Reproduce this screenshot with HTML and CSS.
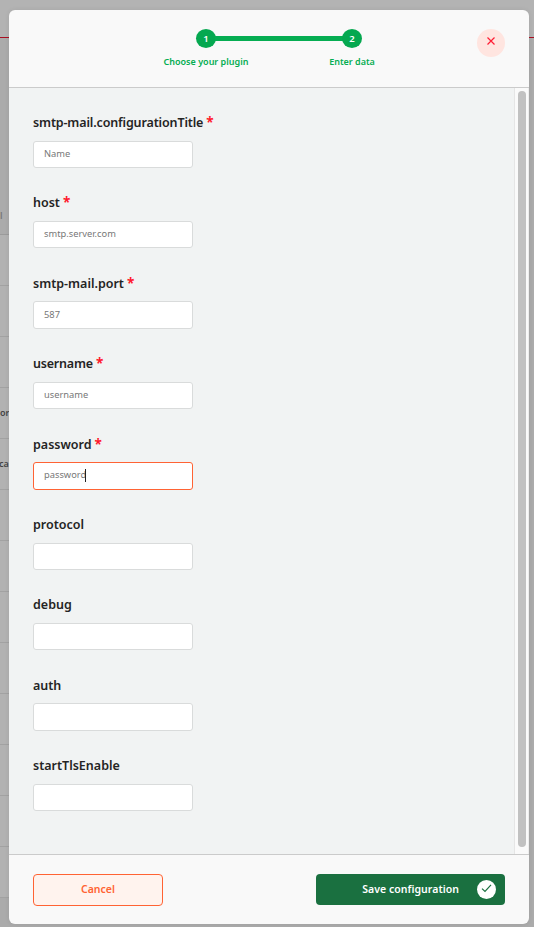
FILE: index.html
```html
<!DOCTYPE html>
<html lang="en">
<head>
<meta charset="utf-8">
<title>Save configuration</title>
<link rel="stylesheet" href="styles.css">
</head>
<body>
<div class="page">
  <div class="topbar"></div>
  <div class="thead"><span>l</span></div>
  <div class="row"></div>
  <div class="row"></div>
  <div class="row"></div>
  <div class="row"><span>or</span></div>
  <div class="row"><span class="cut">ca</span></div>
  <div class="row"></div>
  <div class="row"></div>
  <div class="row"></div>
  <div class="row"></div>
  <div class="row"></div>
  <div class="row"></div>
  <div class="row"></div>
  <div class="row"></div>
</div>
<div class="modal">
  <header class="header">
    <div class="stepper">
      <div class="step"><span class="dot">1</span><span class="step-name">Choose your plugin</span></div>
      <div class="line"></div>
      <div class="step"><span class="dot">2</span><span class="step-name second">Enter data</span></div>
    </div>
    <button class="close" aria-label="Close"><svg width="10" height="10" viewBox="0 0 10 10"><path d="M1.5 1.5l7 7M8.5 1.5l-7 7"/></svg></button>
  </header>
  <main class="content">
    <form class="form">
      <div class="field"><label><span class="name title">smtp-mail.configurationTitle</span><b>*</b></label><div class="input">Name</div></div>
      <div class="field"><label><span class="name">host</span><b>*</b></label><div class="input">smtp.server.com</div></div>
      <div class="field"><label><span class="name">smtp-mail.port</span><b>*</b></label><div class="input">587</div></div>
      <div class="field"><label><span class="name user">username</span><b>*</b></label><div class="input">username</div></div>
      <div class="field"><label><span class="name">password</span><b>*</b></label><div class="input focused">password<i class="caret"></i></div></div>
      <div class="field"><label><span class="name">protocol</span></label><div class="input"></div></div>
      <div class="field"><label><span class="name">debug</span></label><div class="input"></div></div>
      <div class="field"><label><span class="name">auth</span></label><div class="input"></div></div>
      <div class="field"><label><span class="name">startTlsEnable</span></label><div class="input"></div></div>
    </form>
    <div class="track"><div class="thumb"></div></div>
  </main>
  <footer class="footer">
    <button class="btn cancel">Cancel</button>
    <button class="btn save"><span>Save configuration</span><span class="check"><svg width="11" height="9" viewBox="0 0 11 9"><path d="M1 4.6l3 2.9L10 .9"/></svg></span></button>
  </footer>
</div>
</body>
</html>
```
FILE: styles.css
```css
* { box-sizing: border-box; }
body {
  margin: 0;
  height: 927px;
  overflow: hidden;
  position: relative;
  font-family: "Noto Sans", "Open Sans", sans-serif;
  color: #242424;
}
.page { height: 927px; background: #ababab; overflow: hidden; font-size: 9px; font-weight: 600; color: #444; }
.topbar { height: 38px; background: #b3b3b3; border-bottom: 1px solid #a90f22; }
.thead { width: 60px; height: 197px; background: #ababab; border-bottom: 1px solid #9b9b9b; padding-top: 171px; }
.thead span { display: block; line-height: 13px; color: #777; }
.row { width: 60px; height: 51px; background: #b2b2b2; border-bottom: 1px solid #a2a2a2; display: flex; align-items: center; padding-bottom: 2px; }
.row .cut { margin-left: -1px; }
.modal {
  position: absolute;
  left: 9px;
  top: 10px;
  width: 520px;
  height: 914px;
  border-radius: 6px;
  background: #f9f9f9;
  overflow: hidden;
  display: flex;
  flex-direction: column;
  box-shadow: 0 0 5px rgba(0, 0, 0, .08);
}
.header { height: 78px; flex: none; border-bottom: 1px solid #cbcbcb; display: flex; padding: 19px 24px 0 146px; justify-content: space-between; }
.stepper { display: flex; color: #05ad52; }
.step { width: 102px; display: flex; flex-direction: column; align-items: center; }
.dot { width: 20px; height: 19px; border-radius: 50%; background: #05a850; color: #fff; font-size: 9.5px; font-weight: 600; line-height: 19px; text-align: center; }
.step-name { font-size: 9px; font-weight: 600; line-height: 14px; margin-top: 7px; white-space: nowrap; }
.line { height: 5px; width: 128px; margin: 7px -42px 0; background: #05ad52; }
.close { width: 28px; height: 28px; border: 0; border-radius: 50%; background: #ffe5e0; padding: 0 0 4px; display: flex; align-items: center; justify-content: center; }
.close svg { fill: none; stroke: #ff1d34; stroke-width: 1.2; }
.content { flex: 1; display: flex; background: #f1f3f3; }
.form { flex: 1; padding: 24px 24px 0; }
.field { height: 80.4px; }
.field label { display: flex; height: 28.6px; font-size: 12.5px; font-weight: 600; line-height: 21px; white-space: nowrap; }
.title { letter-spacing: -.14px; }
.user { letter-spacing: -.2px; }
.field b { color: #ff1a2d; margin-left: 3px; font-size: 13.5px; font-weight: 700; }
.input { width: 160px; height: 27.5px; border: 1px solid #d9dbdb; border-radius: 3px; background: #fff; padding: 0 10px 1px; font-size: 9.3px; line-height: 24px; color: #777; display: flex; align-items: center; }
.focused { border-color: #ff6334; }
.caret { width: 1px; height: 13px; margin-left: -1px; background: #222; }
.track { width: 15px; background: #fafafa; border-left: 1px solid #e5e5e5; border-right: 1px solid #ededed; padding: 3px 2px 7px 3px; }
.thumb { width: 8px; height: 756px; border-radius: 4px; background: #c1c1c1; }
.footer { height: 70px; flex: none; border-top: 1px solid #cbcbcb; padding: 19px 24px 0; display: flex; justify-content: space-between; align-items: flex-start; }
.btn { font: 600 10.5px "Noto Sans", "Open Sans", sans-serif; border-radius: 4px; padding: 0; }
.cancel { width: 130px; height: 32px; border: 1px solid #ff6334; background: #fff3ee; color: #ff6334; padding-bottom: 2px; }
.save { width: 189px; height: 31px; border: 0; background: #1a7040; color: #fff; display: flex; align-items: center; justify-content: flex-end; padding-right: 9px; gap: 18px; }
.save > span:first-child { padding-bottom: 2px; letter-spacing: .04px; }
.check { width: 19px; height: 19px; border-radius: 50%; background: #fff; display: flex; align-items: center; justify-content: center; padding-bottom: 2px; }
.check svg { fill: none; stroke: #1a7040; stroke-width: 1.2; }
```
